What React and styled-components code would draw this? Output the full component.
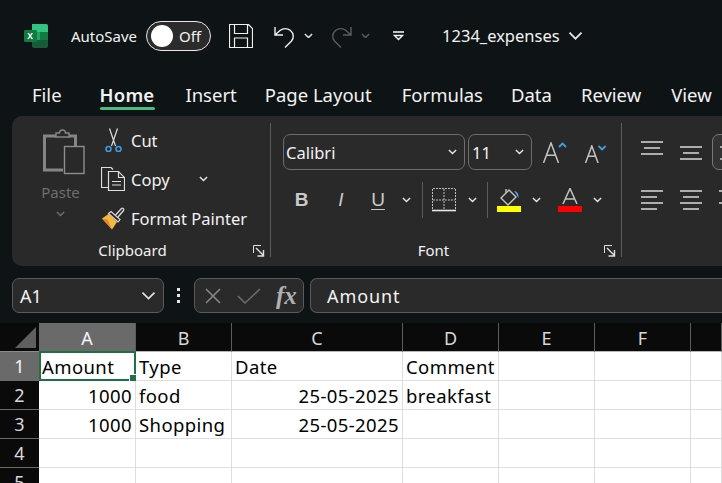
import React from 'react';
import styled, { createGlobalStyle } from 'styled-components';

const UI_FONT = '"Noto Sans", "Open Sans", sans-serif';

const GlobalStyle = createGlobalStyle`
  html, body {
    margin: 0;
    padding: 0;
    background: #0e1315;
    overflow: hidden;
  }
  * {
    box-sizing: border-box;
  }
`;

const Page = styled.div`
  width: 722px;
  height: 483px;
  overflow: hidden;
  display: flex;
  flex-direction: column;
  background: #0e1315;
  color: #f2f2f2;
  font-family: ${UI_FONT};
`;

const TitleBar = styled.div`
  display: flex;
  align-items: center;
  height: 71px;
  padding-left: 24px;
  flex-shrink: 0;
`;

const AutoSaveLabel = styled.span`
  margin-left: 23px;
  font-size: 15px;
  white-space: nowrap;
`;

const Toggle = styled.div`
  display: flex;
  align-items: center;
  width: 65px;
  height: 30px;
  margin-left: 9px;
  padding-left: 4px;
  border: 1px solid #e8e8e8;
  border-radius: 15px;
  background: #2b2b2b;
  font-size: 15px;
  flex-shrink: 0;
`;

const Knob = styled.span`
  width: 22px;
  height: 22px;
  margin-right: 6px;
  border-radius: 50%;
  background: #fff;
`;

const QuickIcon = styled.svg`
  flex-shrink: 0;
  display: block;
  margin-left: ${props => props.$left || 0}px;
`;

const DocTitle = styled.span`
  margin-left: 38px;
  font-size: 16.5px;
  white-space: nowrap;
`;

const Tabs = styled.div`
  display: flex;
  height: 45px;
  padding-left: 32px;
  flex-shrink: 0;
`;

const Tab = styled.div`
  position: relative;
  margin-right: ${props => props.$gap}px;
  padding-top: 11px;
  font-size: 18.5px;
  line-height: 26px;
  font-weight: ${props => (props.$active ? 600 : 400)};
  white-space: nowrap;
  letter-spacing: ${props => (props.$active ? '0.2px' : '0')};

  ${props => (props.$active
    ? `&::after {
        content: '';
        position: absolute;
        left: 0;
        right: -1px;
        top: 36px;
        height: 3px;
        border-radius: 2px;
        background: #4fba7f;
      }`
    : '')};
`;

const Ribbon = styled.div`
  display: flex;
  height: 150px;
  margin-left: 12px;
  padding: 7px 0 9px;
  border-radius: 10px 0 0 10px;
  background: #292929;
  flex-shrink: 0;
`;

const Group = styled.section`
  display: flex;
  flex-direction: column;
  width: ${props => props.$width}px;
  flex-shrink: 0;
  border-right: ${props => (props.$last ? 'none' : '1px solid #5c5c5c')};
`;

const GroupBody = styled.div`
  flex: 1;
  min-height: 0;
`;

const GroupFooter = styled.div`
  display: flex;
  align-items: flex-end;
  height: 14px;
  padding-right: 5px;
  flex-shrink: 0;
`;

const GroupLabel = styled.span`
  flex: 1;
  padding-right: ${props => props.$shift || 0}px;
  text-align: center;
  font-size: 15px;
  line-height: 20px;
  margin-bottom: -3px;
`;

const ClipboardBody = styled(GroupBody)`
  display: flex;
  padding-left: 27px;
`;

const PasteColumn = styled.div`
  display: flex;
  flex-direction: column;
  align-items: center;
  width: 43px;
  padding-top: 5px;
  color: #6e6e6e;
  font-size: 15px;
`;

const PasteIconSlot = styled.span`
  display: block;
  margin-left: 6px;
  height: 47px;
`;

const PasteLabel = styled.span`
  margin-top: 7px;
  margin-bottom: 9px;
  line-height: 20px;
`;

const ClipActions = styled.div`
  display: flex;
  flex-direction: column;
  gap: 3px;
  margin: -1px 0 0 19px;
`;

const ClipRow = styled.div`
  display: flex;
  align-items: center;
  height: 36px;
  font-size: 16.5px;
  white-space: nowrap;
  flex-shrink: 0;
`;

const ClipIcon = styled.span`
  display: flex;
  justify-content: center;
  width: 24px;
  margin-right: 6px;
`;

const FontBody = styled(GroupBody)`
  padding: 11px 0 0 12px;
`;

const FontRow = styled.div`
  display: flex;
  align-items: center;
`;

const SecondRow = styled(FontRow)`
  height: 36px;
  margin-top: 12px;
`;

const ComboBox = styled.div`
  display: flex;
  align-items: center;
  justify-content: space-between;
  width: ${props => props.$width}px;
  height: 36px;
  margin-right: 3px;
  padding: 0 7px 0 ${props => props.$pad || 2}px;
  border: 1px solid #6d6d6d;
  border-radius: 7px;
  background: #2a2a2a;
  font-size: 16.5px;
  flex-shrink: 0;
`;

const GrowSlot = styled.span`
  display: flex;
  align-items: flex-end;
  height: 20px;
  margin-left: ${props => props.$left}px;
  margin-top: 2px;
`;

const RowDivider = styled.span`
  width: 1px;
  height: 36px;
  margin: 0 ${props => props.$right || 9}px 0 ${props => props.$left || 9}px;
  background: #5c5c5c;
`;

const AlignBody = styled(GroupBody)`
  display: grid;
  grid-template-columns: 22px 22px 22px;
  grid-auto-rows: min-content;
  column-gap: 17px;
  padding: 17px 0 0 19px;
`;

const AlignButton = styled.div`
  display: flex;
  align-items: flex-start;
  height: 50px;
  padding-top: ${props => props.$top || 0}px;
`;

const OutlinedBox = styled.div`
  width: 40px;
  height: 36px;
  margin: -6px 0 0 -7px;
  border: 1px solid #777;
  border-radius: 7px;
  background: #333;
  padding: 11px 0 0 7px;
  flex-shrink: 0;
`;

const FormulaBar = styled.div`
  display: flex;
  align-items: center;
  height: 35px;
  margin-top: 12px;
  padding-left: 12px;
  flex-shrink: 0;
`;

const BarBox = styled.div`
  display: flex;
  align-items: center;
  height: 35px;
  border: 1px solid #5a5a5a;
  border-radius: 7px;
  background: #2a2a2a;
  font-size: 18px;
`;

const NameBox = styled(BarBox)`
  justify-content: space-between;
  width: 152px;
  padding: 0 7px 0 7px;
`;

const Grip = styled.span`
  display: flex;
  flex-direction: column;
  gap: 3px;
  margin: 0 14px 0 13px;

  i {
    display: block;
    width: 3px;
    height: 3px;
    background: #e6e6e6;
  }
`;

const FunctionBox = styled(BarBox)`
  width: 110px;
  padding-left: 9px;
  color: #8c8c8c;
`;

const FxLabel = styled.span`
  margin-left: 15px;
  font-family: "Liberation Serif", serif;
  font-size: 25px;
  font-style: italic;
  font-weight: 700;
  color: #b0b0b0;
  line-height: 1;
`;

const FormulaInput = styled(BarBox)`
  flex: 1;
  margin-left: 6px;
  padding-left: 16px;
  border-radius: 7px 0 0 7px;
  border-right: none;
  letter-spacing: 0.9px;
`;

const Sheet = styled.div`
  display: grid;
  grid-template-columns: 39px 97px 96px 171px 96px 96px 96px 31px;
  grid-template-rows: 29px repeat(5, 29px);
  margin-top: 10px;
  flex-shrink: 0;
`;

const Corner = styled.div`
  position: relative;
  background: #0a0a0a;
  border-bottom: 1px solid #8a8a8a;

  &::after {
    content: '';
    position: absolute;
    right: 3px;
    bottom: 3px;
    border-style: solid;
    border-width: 0 0 21px 21px;
    border-color: transparent transparent #5f5f5f transparent;
  }
`;

const ColumnHeader = styled.div`
  display: flex;
  align-items: center;
  justify-content: center;
  padding-top: 2px;
  background: ${props => (props.$active ? '#6a6a6a' : '#0a0a0a')};
  border-right: 1px solid #5c5c5c;
  border-bottom: 1px solid ${props => (props.$active ? '#d0d0d0' : '#b8b8b8')};
  color: ${props => (props.$active ? '#f5f5f5' : '#d8d8d8')};
  font-size: 18px;
`;

const RowHeader = styled.div`
  display: flex;
  align-items: center;
  justify-content: center;
  background: ${props => (props.$active ? '#6a6a6a' : '#0a0a0a')};
  border-bottom: 1px solid #6a6a6a;
  color: ${props => (props.$active ? '#f5f5f5' : '#d8d8d8')};
  font-size: 18px;
`;

const Cell = styled.div`
  position: relative;
  display: flex;
  align-items: center;
  justify-content: ${props => (props.$number ? 'flex-end' : 'flex-start')};
  padding: 0 ${props => (props.$number ? 3 : 0)}px 0 ${props => (props.$number ? 0 : 3)}px;
  background: #fff;
  border-right: 1px solid #dedede;
  border-bottom: 1px solid #dedede;
  color: #000;
  font-size: 18.5px;
  letter-spacing: 0.4px;
  white-space: nowrap;
`;

const Selection = styled.span`
  position: absolute;
  left: 0;
  top: -1px;
  right: -1px;
  bottom: -1px;
  border: 2px solid #1f7145;
  pointer-events: none;

  &::after {
    content: '';
    position: absolute;
    right: -4px;
    bottom: -4px;
    width: 7px;
    height: 7px;
    background: #1f7145;
    border: 1px solid #fff;
  }
`;

const StyleLetter = styled.span`
  display: flex;
  justify-content: center;
  width: ${props => props.$width}px;
  font-family: "Liberation Sans", sans-serif;
  font-size: 19px;
  line-height: 22px;
  font-weight: ${props => (props.$bold ? 700 : 400)};
  font-style: ${props => (props.$italic ? 'italic' : 'normal')};
  text-decoration: ${props => (props.$underline ? 'underline' : 'none')};
  text-underline-offset: 3px;
  color: #c9c9c9;
`;

const Chevron = ({ size = 9, color = '#e4e4e4', weight = 1.6, left = 0, right = 0 }) => (
  <svg
    width={size}
    height={size * 0.62}
    viewBox="0 0 10 6"
    style={{ flexShrink: 0, marginLeft: left, marginRight: right }}
  >
    <path d="M1 1l4 4 4-4" fill="none" stroke={color} strokeWidth={weight} />
  </svg>
);

const Launcher = () => (
  <svg width="12" height="12" viewBox="0 0 12 12" style={{ flexShrink: 0 }}>
    <path d="M.5 8V.5H8" fill="none" stroke="#e0e0e0" strokeWidth="1" />
    <path d="M3 3l7 7M10.500 5v6H4.500" fill="none" stroke="#e0e0e0" strokeWidth="1.400" />
  </svg>
);

const ExcelLogo = () => (
  <QuickIcon width="24" height="24" viewBox="0 0 24 24">
    <path d="M8 0h14a2 2 0 0 1 2 2v6H8z" fill="#33c481" />
    <rect x="8" y="8" width="16" height="8" fill="#21a366" />
    <path d="M8 16h16v6a2 2 0 0 1-2 2H10a2 2 0 0 1-2-2z" fill="#185c37" />
    <rect x="16" y="8" width="8" height="8" fill="#107c41" />
    <rect y="6" width="13" height="12" rx="1.2" fill="#107c41" />
    <path d="M3.4 9l2 3-2.1 3h1.6l1.3-2.1L7.5 15h1.6l-2.1-3 2-3H7.5L6.2 11 5 9z" fill="#fff" />
  </QuickIcon>
);

const SaveIcon = () => (
  <QuickIcon $left={18} width="24" height="24" viewBox="0 0 24 24">
    <path
      d="M.5.5h19l4 4v19H.5zM5.5.5v9h13v-9M5.500 23.500v-9.500h13v9.500"
      fill="none"
      stroke="#f0f0f0"
      strokeWidth="1.2"
    />
  </QuickIcon>
);

const UndoIcon = ({ color = '#f0f0f0', flip, left }) => (
  <QuickIcon
    $left={left}
    width="22"
    height="24"
    viewBox="0 0 22 24"
    style={flip ? { transform: 'scaleX(-1)' } : undefined}
  >
    <path
      d="M1 3v8h8M1.500 10.500L6 6.500c3-2.500 7.500-2.500 10.500 0 3.500 3 3.500 7.500 1 10.500l-6.500 6.500"
      fill="none"
      stroke={color}
      strokeWidth="1.4"
    />
  </QuickIcon>
);

const QatIcon = () => (
  <QuickIcon $left={23} width="11" height="10" viewBox="0 0 11 10">
    <path d="M0 1h11" stroke="#f0f0f0" strokeWidth="1.6" />
    <path d="M1.500 4.500h8L5.500 8.500z" fill="none" stroke="#f0f0f0" strokeWidth="1.4" />
  </QuickIcon>
);

const PasteIcon = () => (
  <svg width="42" height="47" viewBox="0 0 42 47">
    <path d="M13 8H1.500v34H20" fill="none" stroke="#858585" strokeWidth="3" />
    <path d="M25 8h7.500v10" fill="none" stroke="#858585" strokeWidth="3" />
    <path d="M13 9V5h3.500a3 3 0 0 1 6 0H26v4z" fill="#292929" stroke="#858585" strokeWidth="1.4" />
    <rect x="21.500" y="18.500" width="19.500" height="27" fill="#292929" stroke="#8d8d8d" strokeWidth="1.4" />
  </svg>
);

const ScissorsIcon = () => (
  <svg width="17" height="24" viewBox="0 0 17 24">
    <path d="M4.500 0.500l6 17.500M12.500 0.500l-6 17.500" fill="none" stroke="#dcdcdc" strokeWidth="1.2" />
    <circle cx="3.500" cy="21" r="2.500" fill="none" stroke="#3c9be0" strokeWidth="1.6" />
    <circle cx="13.500" cy="21" r="2.500" fill="none" stroke="#3c9be0" strokeWidth="1.6" />
  </svg>
);

const CopyIcon = () => (
  <svg width="24" height="24" viewBox="0 0 24 24">
    <path d="M7 20.500H.5V.5H10l2 2" fill="none" stroke="#dedede" strokeWidth="1.2" />
    <path d="M7.500 4.500h10l6 6v13h-16z" fill="#292929" stroke="#dedede" strokeWidth="1.200" />
    <path d="M17.500 4.500v6h6M11 14.500h9M11 18h9" fill="none" stroke="#dedede" strokeWidth="1.200" />
  </svg>
);

const BrushIcon = () => (
  <svg width="24" height="23" viewBox="0 0 24 23">
    <path d="M14.500 8l6-6.500c1-1 3 .5 2 2L17 10" fill="none" stroke="#d8d8d8" strokeWidth="1.300" />
    <path d="M10 4.500l9 8-2 2.500-9.500-8.500z" fill="#292929" stroke="#d8d8d8" strokeWidth="1.200" />
    <path d="M7.500 7L1 11.500l10 11 5-7.500z" fill="#f5b93f" />
    <path d="M1 11.500l5.500 1L11 22.500z" fill="#e08a2c" />
  </svg>
);

// big and small "A" with a blue caret beside it
const FontSizeIcon = ({ height, up }) => {
  const w = height * 0.8;
  return (
    <svg width={w + 8} height={height + 1} viewBox={`0 0 ${w + 8} ${height + 1}`}>
      <path
        d={`M.5 ${height + 1}L${w / 2} 1L${w - 0.5} ${height + 1}M${w * 0.2} ${height * 0.66}H${w * 0.8}`}
        fill="none"
        stroke="#c4c4c4"
        strokeWidth="1.500"
      />
      <path
        d={up ? `M${w} 5l3.500-3.500 3.500 3.500` : `M${w} 1l3.500 3.500 3.500-3.500`}
        fill="none"
        stroke="#3f9fe0"
        strokeWidth="1.800"
      />
    </svg>
  );
};

const BorderIcon = () => (
  <svg width="24" height="24" viewBox="0 0 24 24">
    <path
      d="M1 .500h22M1 12h22M.500 1v20M12 1v20M23.500 1v20"
      fill="none"
      stroke="#bdbdbd"
      strokeWidth="1"
      strokeDasharray="2 1"
    />
    <path d="M0 22.500h24" stroke="#e8e8e8" strokeWidth="1.600" />
  </svg>
);

const FillIcon = () => (
  <svg width="24" height="24" viewBox="0 0 24 24">
    <path d="M4 10L12 2l7 7-8 8z" fill="none" stroke="#c4c4c4" strokeWidth="1.400" />
    <path d="M9 5V1" stroke="#c4c4c4" strokeWidth="1.400" />
    <path d="M17 3c3 0 5 3 4.500 7-1.500-2-2-4-4.500-7z" fill="#5aa6dc" />
    <rect y="18" width="24" height="6" fill="#ffff00" />
  </svg>
);

const TextColorIcon = () => (
  <svg width="24" height="24" viewBox="0 0 24 24">
    <path d="M5 16L12 0.500 19 16M7.500 11h9" fill="none" stroke="#c4c4c4" strokeWidth="1.500" />
    <rect y="18" width="24" height="6" fill="#ff0000" />
  </svg>
);

const AlignLines = ({ widths }) => (
  <svg width="22" height={widths.length * 6} viewBox={`0 0 22 ${widths.length * 6}`}>
    {widths.map(([x1, x2], i) => (
      <path key={i} d={`M${x1} ${i * 6 + 1}H${x2}`} stroke="#cfcfcf" strokeWidth="1.600" />
    ))}
  </svg>
);

const tabs = [
  ['File', 38],
  ['Home', 31, true],
  ['Insert', 28],
  ['Page Layout', 30],
  ['Formulas', 28],
  ['Data', 29],
  ['Review', 30],
  ['View', 0],
];

const columns = ['A', 'B', 'C', 'D', 'E', 'F', ''];

const rows = [
  [['Amount'], ['Type'], ['Date'], ['Comment'], [''], [''], ['']],
  [['1000', true], ['food'], ['25-05-2025', true], ['breakfast'], [''], [''], ['']],
  [['1000', true], ['Shopping'], ['25-05-2025', true], [''], [''], [''], ['']],
  [[''], [''], [''], [''], [''], [''], ['']],
  [[''], [''], [''], [''], [''], [''], ['']],
];

const App = () => (
  <Page>
    <GlobalStyle />
    <TitleBar>
      <ExcelLogo />
      <AutoSaveLabel>AutoSave</AutoSaveLabel>
      <Toggle>
        <Knob />
        Off
      </Toggle>
      <SaveIcon />
      <UndoIcon left={21} />
      <Chevron left={8} />
      <UndoIcon left={17} color="#5c5c5c" flip />
      <Chevron left={9} color="#5c5c5c" />
      <QatIcon />
      <DocTitle>1234_expenses</DocTitle>
      <Chevron size={15} left={8} weight={1.2} />
    </TitleBar>

    <Tabs>
      {tabs.map(([name, gap, active]) => (
        <Tab key={name} $gap={gap} $active={active}>{name}</Tab>
      ))}
    </Tabs>

    <Ribbon>
      <Group $width={259}>
        <ClipboardBody>
          <PasteColumn>
            <PasteIconSlot><PasteIcon /></PasteIconSlot>
            <PasteLabel>Paste</PasteLabel>
            <Chevron color="#6e6e6e" />
          </PasteColumn>
          <ClipActions>
            <ClipRow>
              <ClipIcon><ScissorsIcon /></ClipIcon>
              Cut
            </ClipRow>
            <ClipRow>
              <ClipIcon><CopyIcon /></ClipIcon>
              Copy
              <Chevron left={29} />
            </ClipRow>
            <ClipRow>
              <ClipIcon><BrushIcon /></ClipIcon>
              Format Painter
            </ClipRow>
          </ClipActions>
        </ClipboardBody>
        <GroupFooter>
          <GroupLabel>Clipboard</GroupLabel>
          <Launcher />
        </GroupFooter>
      </Group>

      <Group $width={351}>
        <FontBody>
          <FontRow>
            <ComboBox $width={182}>
              Calibri
              <Chevron />
            </ComboBox>
            <ComboBox $width={64} $pad={3}>
              11
              <Chevron />
            </ComboBox>
            <GrowSlot $left={8}><FontSizeIcon height={20} up /></GrowSlot>
            <GrowSlot $left={18}><FontSizeIcon height={17} /></GrowSlot>
          </FontRow>
          <SecondRow>
            <StyleLetter $width={37} $bold>B</StyleLetter>
            <StyleLetter $width={42} $italic>I</StyleLetter>
            <StyleLetter $width={32} $underline>U</StyleLetter>
            <Chevron left={8} />
            <RowDivider $left={11} $right={9} />
            <BorderIcon />
            <Chevron left={12} />
            <RowDivider $left={10} $right={9} />
            <FillIcon />
            <Chevron left={11} />
            <span style={{ width: 17 }} />
            <TextColorIcon />
            <Chevron left={11} />
          </SecondRow>
        </FontBody>
        <GroupFooter>
          <GroupLabel $shift={8}>Font</GroupLabel>
          <Launcher />
        </GroupFooter>
      </Group>

      <Group $width={100} $last>
        <AlignBody>
          <AlignButton $top={1}>
            <AlignLines widths={[[0, 22], [3, 19], [0, 22]]} />
          </AlignButton>
          <AlignButton $top={6}>
            <AlignLines widths={[[0, 22], [3, 19], [0, 22]]} />
          </AlignButton>
          <AlignButton>
            <OutlinedBox><AlignLines widths={[[0, 22], [3, 19], [0, 22]]} /></OutlinedBox>
          </AlignButton>
          <AlignButton>
            <AlignLines widths={[[0, 22], [0, 16], [0, 22], [0, 16]]} />
          </AlignButton>
          <AlignButton>
            <AlignLines widths={[[0, 22], [3, 19], [0, 22], [3, 19]]} />
          </AlignButton>
          <AlignButton>
            <AlignLines widths={[[0, 22], [6, 22], [0, 22], [6, 22]]} />
          </AlignButton>
        </AlignBody>
      </Group>
    </Ribbon>

    <FormulaBar>
      <NameBox>
        A1
        <Chevron size={15} weight={1.1} />
      </NameBox>
      <Grip><i /><i /><i /></Grip>
      <FunctionBox>
        <svg width="18" height="18" viewBox="0 0 18 18">
          <path d="M2 2l14 14M16 2L2 16" stroke="#8a8a8a" strokeWidth="1.500" />
        </svg>
        <svg width="24" height="18" viewBox="0 0 24 18" style={{ marginLeft: 15 }}>
          <path d="M1 9l7 7L23 2" fill="none" stroke="#6e6e6e" strokeWidth="1.500" />
        </svg>
        <FxLabel>fx</FxLabel>
      </FunctionBox>
      <FormulaInput>Amount</FormulaInput>
    </FormulaBar>

    <Sheet>
      <Corner />
      {columns.map((col, i) => (
        <ColumnHeader key={col || 'next'} $active={i === 0}>{col}</ColumnHeader>
      ))}
      {rows.map((row, r) => (
        <React.Fragment key={r}>
          <RowHeader $active={r === 0}>{r + 1}</RowHeader>
          {row.map(([text, number], c) => (
            <Cell key={c} $number={number}>
              {text}
              {r === 0 && c === 0 && <Selection />}
            </Cell>
          ))}
        </React.Fragment>
      ))}
    </Sheet>
  </Page>
);

export default App;
